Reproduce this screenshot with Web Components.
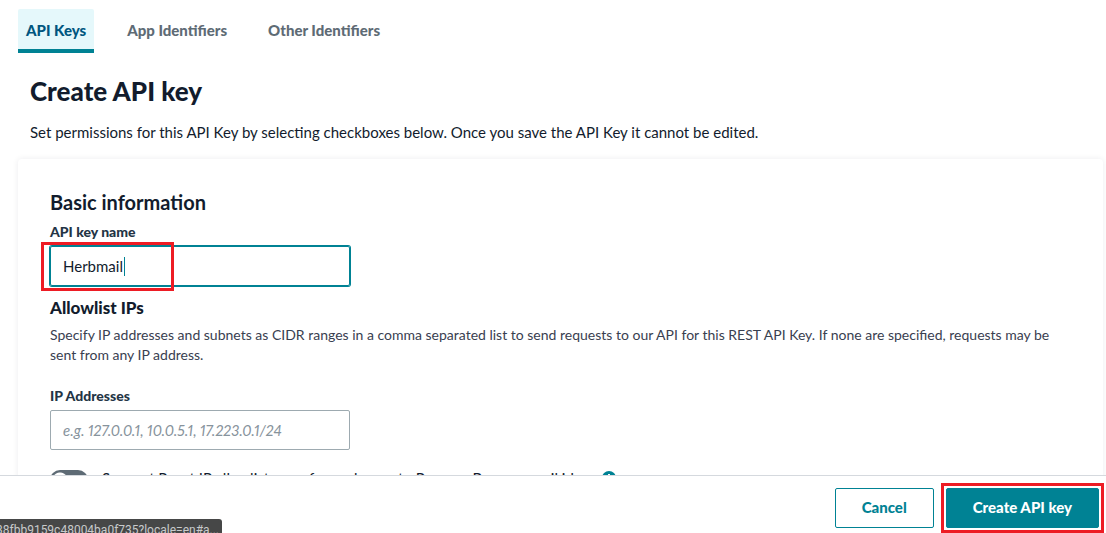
<!DOCTYPE html>
<html lang="en">
<head>
<meta charset="utf-8">
<title>Create API key</title>
<style>
  body {
    margin: 0;
    font-family: "Lato", "Liberation Sans", sans-serif;
    font-size: 15px;
    color: #121c2d;
    background: #fff;
  }
</style>
</head>
<body>
<api-key-page></api-key-page>

<script>
(function() {
  function define(name, html, setup) {
    const template = document.createElement("template");
    template.innerHTML = html;

    customElements.define(name, class extends HTMLElement {
      constructor() {
        super();
        this.attachShadow({ mode: "open" });
        this.shadowRoot.appendChild(template.content.cloneNode(true));
      }

      connectedCallback() {
        if (setup) {
          setup(this, this.shadowRoot);
        }
      }
    });
  }

  define("tab-link", `
    <style>
      :host { display: block; }
      a {
        display: block;
        padding: 13px 8px 11px;
        line-height: 16px;
        font-size: 15px;
        font-weight: 900;
        color: #5e6b75;
        text-decoration: none;
        border-bottom: 4px solid transparent;
      }
      :host([selected]) a {
        color: #00567f;
        background: #e5f8fb;
        border-bottom-color: #008294;
        border-radius: 2px 2px 0 0;
      }
    </style>
    <a href="#"><slot></slot></a>
  `);

  define("text-field", `
    <style>
      :host { display: block; position: relative; }
      label {
        display: block;
        margin-bottom: 4px;
        font-size: 14px;
        font-weight: 900;
        line-height: 20px;
        color: #233445;
      }
      input {
        display: block;
        box-sizing: border-box;
        width: 300px;
        max-width: 100%;
        height: 40px;
        padding: 0 12px;
        font: inherit;
        font-variant-numeric: proportional-nums;
        color: #121c2d;
        background: #fff;
        border: 1px solid #9daab0;
        border-radius: 2px;
        outline: none;
      }
      input::placeholder { color: #87939c; font-style: italic; opacity: 1; }
      :host([active]) input {
        border-color: #008294;
        box-shadow: 0 0 0 1px #008294;
        background: linear-gradient(#008294, #008294) 73px center / 1px 19px no-repeat;
      }
    </style>
    <label for="field"></label>
    <input id="field" type="text">
    <slot></slot>
  `, (host, root) => {
    const input = root.querySelector("input");
    root.querySelector("label").textContent = host.getAttribute("label");
    input.value = host.getAttribute("value") || "";
    input.placeholder = host.getAttribute("placeholder") || "";
  });

  define("toggle-switch", `
    <style>
      :host { display: flex; align-items: flex-start; gap: 14px; }
      input {
        appearance: none;
        width: 38px;
        height: 20px;
        margin: 0;
        border-radius: 10px;
        background: radial-gradient(circle at 10px 10px, #fff 7px, #5e6b75 8px);
      }
      label { padding-right: 8px; line-height: 16px; }
      svg { display: block; margin-top: 1px; }
    </style>
    <input id="toggle" type="checkbox" role="switch">
    <label for="toggle"><slot></slot></label>
    <svg width="14" height="14" viewBox="0 0 14 14" aria-hidden="true">
      <circle cx="7" cy="7" r="7" fill="#008294"/>
      <path d="M6 3h2v2H6zM6 6h2v5H6z" fill="#fff"/>
    </svg>
  `);

  define("action-button", `
    <style>
      :host { display: block; }
      button {
        display: block;
        height: 40px;
        padding: 0 26px 2px;
        font: inherit;
        font-weight: 900;
        color: #008294;
        background: #fff;
        border: 1px solid #008294;
        border-radius: 2px;
      }
      :host([primary]) button { color: #fff; background: #008294; }
      :host([marked]) { outline: 3px solid #ed1c24; outline-offset: 2px; }
    </style>
    <button type="button"><slot></slot></button>
  `);

  define("info-card", `
    <style>
      :host {
        display: block;
        padding: 32px;
        border-radius: 4px;
        background: #fff;
        box-shadow: 0 0 6px rgba(18, 28, 45, 0.08);
      }
    </style>
    <slot></slot>
  `);

  define("footer-bar", `
    <style>
      :host {
        display: flex;
        justify-content: flex-end;
        gap: 12px;
        padding: 12px 7px 5px;
        background: #fff;
        border-top: 1px solid #d5d9de;
      }
    </style>
    <slot></slot>
  `);

  define("link-status", `
    <style>
      :host {
        position: absolute;
        left: -4px;
        bottom: 0;
        height: 14px;
        padding-right: 3px;
        overflow: hidden;
        font: 12px/22px "Roboto", sans-serif;
        color: #c8cacb;
        background: #464747;
        border-top-right-radius: 3px;
      }
    </style>
    <slot></slot>
  `);

  define("api-key-page", `
    <style>
      :host {
        display: flex;
        flex-direction: column;
        position: relative;
        height: 100vh;
        overflow: hidden;
      }
      main { flex: 1; min-height: 0; overflow: hidden; }
      nav { display: flex; gap: 25px; padding: 9px 18px 0; }
      h1, h2, h3, p { margin: 0; }
      header { padding: 22px 30px 17px; }
      h1 { font-size: 26px; font-weight: 900; line-height: 32px; margin-bottom: 15px; }
      header p { line-height: 20px; }
      info-card { margin: 0 3px 0 18px; padding-top: 31px; }
      h2 { font-size: 20px; font-weight: 700; line-height: 24px; margin-bottom: 8px; }
      h3 { font-size: 17px; font-weight: 900; line-height: 20px; margin: 12px 0 7px; }
      .hint {
        margin-bottom: 21px;
        font-size: 14px;
        line-height: 20px;
        color: #394050;
      }
      toggle-switch { margin-top: 20px; }
      .mark {
        position: absolute;
        left: -9px;
        bottom: -5px;
        box-sizing: border-box;
        width: 133px;
        height: 49px;
        border: 3px solid #ed1c24;
        pointer-events: none;
      }
    </style>
    <main>
      <nav>
        <tab-link selected>API Keys</tab-link>
        <tab-link>App Identifiers</tab-link>
        <tab-link>Other Identifiers</tab-link>
      </nav>
      <header>
        <h1>Create API key</h1>
        <p>Set permissions for this API Key by selecting checkboxes below. Once you save the API Key it cannot be edited.</p>
      </header>
      <info-card>
        <h2>Basic information</h2>
        <text-field label="API key name" value="Herbmail" active>
          <div class="mark"></div>
        </text-field>
        <h3>Allowlist IPs</h3>
        <p class="hint">Specify IP addresses and subnets as CIDR ranges in a comma separated list to send requests to our API for this REST API Key. If none are specified, requests may be sent from any IP address.</p>
        <text-field label="IP Addresses" placeholder="e.g. 127.0.0.1, 10.0.5.1, 17.223.0.1/24"></text-field>
        <toggle-switch>Support Reset IP allowlist error for each user to Remove Banner email ids</toggle-switch>
      </info-card>
    </main>
    <footer-bar>
      <action-button>Cancel</action-button>
      <action-button primary marked>Create API key</action-button>
    </footer-bar>
    <link-status>38fbb9159c48004ba0f735?locale=en#a...</link-status>
  `);
})();
</script>
</body>
</html>
